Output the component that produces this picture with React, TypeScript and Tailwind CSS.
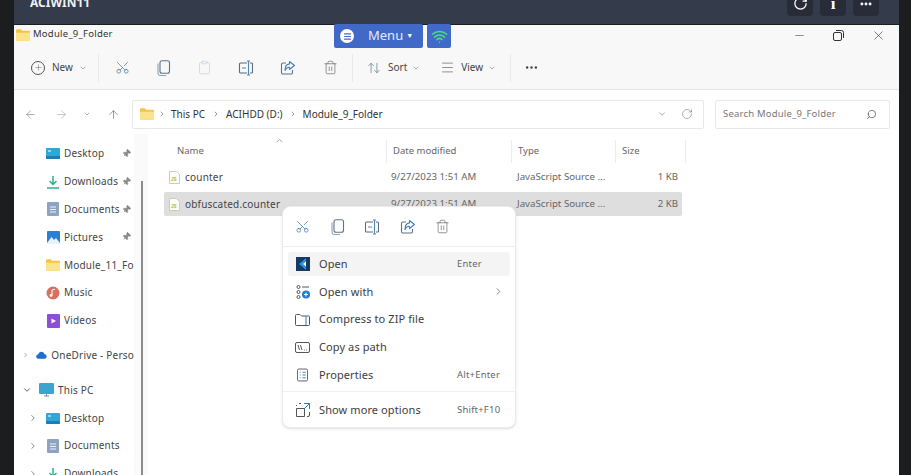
import React from "react";
import { ArrowLeft, ArrowRight, ArrowUp, ArrowUpDown, ChevronDown, ChevronRight, ChevronUp, Clipboard, Ellipsis, Menu as MenuIcon, Minus, Pin, Plus, RotateCw, Scissors, Search, Trash2, Wifi, X } from "lucide-react";

const font = "font-['Noto_Sans','Open_Sans',sans-serif]";

function Folder({ className = "w-[14px] h-[12px]" }: { className?: string }) {
  return (
    <svg viewBox="0 0 16 13" className={className}>
      <path d="M0 1.5C0 .7.6 0 1.4 0h4l1.6 1.6h7.6c.8 0 1.400.6 1.400 1.400v8.600c0 .8-.6 1.400-1.400 1.400H1.400C.6 13 0 12.400 0 11.600z" fill="#f5c542" />
      <path d="M0 4h16v7.600c0 .8-.6 1.400-1.400 1.400H1.400C.6 13 0 12.400 0 11.600z" fill="#fbe38e" />
    </svg>
  );
}

function RestoreIcon() {
  return (
    <svg width="11" height="11" viewBox="0 0 11 11" fill="none" stroke="#333" strokeWidth="1">
      <rect x=".5" y="2.500" width="8" height="8" rx="1.500" />
      <path d="M3 .5h5.500a2 2 0 0 1 2 2V8" />
    </svg>
  );
}

function RenameIcon({ size = 16 }: { size?: number }) {
  return (
    <svg width={size} height={size} viewBox="0 0 16 16" fill="none" strokeWidth="1.100">
      <path d="M9 3H2.500A1 1 0 0 0 1.500 4v8a1 1 0 0 0 1 1H9M12 3h1.500a1 1 0 0 1 1 1v8a1 1 0 0 1-1 1H12" stroke="#5f6b76" />
      <path d="M10.500 1v14M9 1h3M9 15h3M4 8h4" stroke="#4b86bb" />
    </svg>
  );
}

function CopyIcon() {
  return (
    <svg width="15" height="16" viewBox="0 0 15 16" fill="none" stroke="#5f7386" strokeWidth="1.100">
      <rect x="4" y=".8" width="9.500" height="12.500" rx="2" />
      <path d="M2 3.500v9.500a2.500 2.500 0 0 0 2.500 2.500H10" stroke="#8fa0af" />
    </svg>
  );
}

function ShareIcon() {
  return (
    <svg width="16" height="16" viewBox="0 0 16 16" fill="none" strokeWidth="1.100">
      <path d="M6 3H3a1.500 1.500 0 0 0-1.500 1.500v8A1.500 1.500 0 0 0 3 14h8a1.500 1.500 0 0 0 1.500-1.500V10" stroke="#5f7386" />
      <path d="M9.500 1.500 14.500 5.500 9.500 9.500V7.200C7.500 7.200 5.800 8.200 5 10.500 5 6.800 7 4.200 9.500 3.900z" stroke="#3f7fbf" strokeLinejoin="round" />
    </svg>
  );
}

function PageIcon({ tone }: { tone: "doc" | "js" }) {
  if (tone === "js") {
    return (
      <svg viewBox="0 0 11 13" className="w-[11px] h-[13px]">
        <path d="M.5.5h7l3 3v9H.5z" fill="#fdfdf6" stroke="#c9cdbf" />
        <text x="2" y="9.500" fontSize="4.500" fontWeight="700" fill="#a9b84a" fontFamily="Liberation Sans, sans-serif">JS</text>
      </svg>
    );
  }
  return (
    <svg viewBox="0 0 12 14" className="w-[12px] h-[14px]">
      <rect width="12" height="14" rx="1" fill="#8ea3bf" />
      <path d="M3 5h6M3 7.500h6M3 10h6" stroke="#eef2f7" />
    </svg>
  );
}

function QuickIcon({ kind }: { kind: string }) {
  if (kind === "desktop") {
    return (
      <svg viewBox="0 0 14 11" className="w-[14px] h-[11px]">
        <rect width="14" height="11" rx="1" fill="#2fa7d8" />
        <path d="M0 8h14v2a1 1 0 0 1-1 1H1a1 1 0 0 1-1-1z" fill="#1b7fb5" />
        <path d="M2 3h3" stroke="#fff" />
      </svg>
    );
  }
  if (kind === "downloads") {
    return (
      <svg viewBox="0 0 14 14" className="w-[14px] h-[14px]" fill="none" stroke="#2fb08b" strokeWidth="1.500">
        <path d="M7 1v8M3.500 6 7 9.500 10.500 6M1 13h12" />
      </svg>
    );
  }
  if (kind === "documents") return <PageIcon tone="doc" />;
  if (kind === "pictures") {
    return (
      <svg viewBox="0 0 13 13" className="w-[13px] h-[13px]">
        <rect width="13" height="13" rx="1" fill="#2c7fd6" />
        <path d="M0 12 4.500 6 7 9l2-2 4 5v1H0z" fill="#e8f2fb" />
      </svg>
    );
  }
  if (kind === "folder") return <Folder className="w-[14px] h-[12px]" />;
  if (kind === "music") {
    return (
      <svg viewBox="0 0 14 14" className="w-[14px] h-[14px]">
        <circle cx="7" cy="7" r="6.500" fill="#d9705f" />
        <path d="M6 9.500V4l3-.8" stroke="#fff" fill="none" />
        <circle cx="5" cy="9.500" r="1.400" fill="#fff" />
      </svg>
    );
  }
  return (
    <svg viewBox="0 0 13 14" className="w-[13px] h-[14px]">
      <rect width="13" height="14" rx="1" fill="#8d4fd4" />
      <path d="M4.500 4.500v5L9 7z" fill="#fff" />
    </svg>
  );
}

function SideRow({ kind, label, pinned }: { kind: string; label: string; pinned?: boolean }) {
  return (
    <div className="h-[27.8px] flex items-center pl-[32px] relative whitespace-nowrap overflow-hidden">
      <span className="w-[14px] flex justify-center"><QuickIcon kind={kind} /></span>
      <span className="ml-[4px] text-[10px] text-[#444] tracking-[0.2px]">{label}</span>
      {pinned && <Pin size={9} className="absolute left-[108px] top-[9px] text-[#8a8a8a] fill-[#8a8a8a] rotate-45" />}
    </div>
  );
}

function TreeRow({ kind, label }: { kind: string; label: string }) {
  return (
    <div className="h-[27.8px] flex items-center pl-[14px] whitespace-nowrap overflow-hidden">
      <span className="w-[18px] flex items-center text-[#777]">
        <ChevronRight size={10} />
      </span>
      <span className="w-[14px] flex justify-center"><QuickIcon kind={kind} /></span>
      <span className="ml-[4px] text-[10px] text-[#444] tracking-[0.2px]">{label}</span>
    </div>
  );
}

function FileRow({ name, size, selected }: { name: string; size: string; selected?: boolean }) {
  return (
    <div className={`h-[24px] mb-[3px] ml-[16px] w-[518px] flex items-center text-[9.7px] text-[#666] whitespace-nowrap rounded-[2px] ${selected ? "bg-[#dedede]" : ""}`}>
      <span className="w-[21px] pl-[5px] flex"><PageIcon tone="js" /></span>
      <span className="w-[206px] text-[10px] text-[#444] tracking-[0.2px]">{name}</span>
      <span className="w-[126px]">9/27/2023 1:51 AM</span>
      <span className="w-[131px]">JavaScript Source ...</span>
      <span className="w-[30px] text-right">{size}</span>
    </div>
  );
}

function CtxRow({ icon, label, hint, active, arrow }: { icon: React.ReactNode; label: string; hint?: string; active?: boolean; arrow?: boolean }) {
  return (
    <div className={`h-[24px] mb-[3.8px] mx-[5px] rounded-[3px] flex items-center pl-[7px] pr-[3px] ${active ? "bg-[#f4f4f4]" : ""}`}>
      <span className="w-[15px] flex justify-center">{icon}</span>
      <span className="ml-[9px] flex-1 text-[11px] text-[#3d3d3d] tracking-[0.1px]">{label}</span>
      {hint && <span className="w-[50px] text-[9.5px] text-[#666] tracking-[0.2px]">{hint}</span>}
      {arrow && <ChevronRight size={11} className="text-[#777] mr-[3px]" />}
    </div>
  );
}

export default function App() {
  return (
    <div className={`w-[911px] h-[475px] overflow-hidden relative bg-[#1c1d1f] flex flex-col pl-[14px] pr-[12px] ${font}`}>
      {/* remote session bar */}
      <div className="h-[24px] shrink-0 bg-[#343b4a] flex justify-between pl-[16px] pr-[20px]">
        <span className="text-[12px] font-bold text-[#eef0f3] -mt-[6px] leading-[18px]">ACIWIN11</span>
        <div className="flex gap-[7px] -mt-[9px]">
          <span className="w-[26px] h-[25px] rounded-[4px] bg-[#272c38] flex items-center justify-center text-white"><RotateCw size={15} /></span>
          <span className="w-[26px] h-[25px] rounded-[4px] bg-[#272c38] flex items-center justify-center text-white text-[17px] font-bold font-['Liberation_Serif',serif]">i</span>
          <span className="w-[26px] h-[25px] rounded-[4px] bg-[#272c38] flex items-center justify-center text-white"><Ellipsis size={14} strokeWidth={3} /></span>
        </div>
      </div>

      {/* explorer window */}
      <div className="flex-1 mt-[1px] bg-white flex flex-col min-h-0">
        <div className="h-[65px] shrink-0 bg-[#f8f8f8] border-b border-[#e6e6e6]">
          <div className="h-[19px] flex items-center pl-[2px] relative">
            <Folder />
            <span className="ml-[3px] text-[9.5px] text-[#333] tracking-[0.25px]">Module_9_Folder</span>
            <div className="ml-auto mr-[13px] flex items-center gap-[27px] text-[#333] pt-[1px]">
              <Minus size={13} strokeWidth={1} />
              <RestoreIcon />
              <X size={15} strokeWidth={1} />
            </div>
          </div>
          <div className="h-[35px] mt-[6px] flex items-center text-[#555]">
            <div className="w-[85px] h-[28px] pl-[17px] flex items-center border-r border-[#e9e9e9]">
              <span className="w-[14px] h-[14px] rounded-full border border-[#555] flex items-center justify-center"><Plus size={9} strokeWidth={1.2} /></span>
              <span className="ml-[7px] text-[10px] text-[#444]">New</span>
              <ChevronDown size={8} className="ml-[6px] text-[#888]" />
            </div>
            <div className="w-[254px] h-[28px] pl-[16px] flex items-center gap-[26px] border-r border-[#e9e9e9]">
              <Scissors size={15} strokeWidth={1.2} className="text-[#3f7fbf] -rotate-90" />
              <CopyIcon />
              <Clipboard size={15} strokeWidth={1.1} className="text-[#c3ced6]" />
              <RenameIcon />
              <ShareIcon />
              <Trash2 size={15} strokeWidth={1.1} className="text-[#666] ml-[1px]" />
            </div>
            <div className="flex items-center pl-[14px]">
              <ArrowUpDown size={14} strokeWidth={1.1} className="text-[#4a6b8a]" />
              <span className="ml-[7px] text-[10px] text-[#444]">Sort</span>
              <ChevronDown size={8} className="ml-[5px] text-[#888]" />
              <MenuIcon size={15} strokeWidth={1} className="ml-[20px] text-[#555]" />
              <span className="ml-[6px] text-[10px] text-[#444]">View</span>
              <ChevronDown size={8} className="ml-[5px] text-[#888]" />
            </div>
            <div className="w-[1px] h-[28px] bg-[#e9e9e9] ml-[14px]" />
            <Ellipsis size={15} className="ml-[13px] text-[#444]" />
          </div>
        </div>

        {/* address row */}
        <div className="h-[44px] shrink-0 flex items-center pr-[9px] pt-[4px]">
          <div className="w-[118px] flex items-center text-[#888] pl-[10px]">
            <ArrowLeft size={13} strokeWidth={1.2} />
            <ArrowRight size={13} strokeWidth={1.2} className="ml-[18px] text-[#aaa]" />
            <ChevronDown size={8} className="ml-[15px]" />
            <ArrowUp size={13} strokeWidth={1.2} className="ml-[16px] text-[#666]" />
          </div>
          <div className="w-[572px] h-[29px] border border-[#e8e8e8] rounded-[2px] flex items-center pl-[7px] pr-[10px] text-[10px] text-[#333]">
            <Folder />
            <ChevronRight size={8} className="ml-[4px] text-[#666]" />
            <span className="ml-[5px]">This PC</span>
            <ChevronRight size={8} className="ml-[7px] text-[#666]" />
            <span className="ml-[6px]">ACIHDD (D:)</span>
            <ChevronRight size={8} className="ml-[6px] text-[#666]" />
            <span className="ml-[6px]">Module_9_Folder</span>
            <ChevronDown size={10} className="ml-auto mr-[14px] text-[#999]" />
            <RotateCw size={12} strokeWidth={1} className="text-[#666]" />
          </div>
          <div className="ml-[11px] w-[175px] h-[29px] border border-[#e8e8e8] rounded-[2px] flex items-center pl-[7px] pr-[12px] text-[9.5px] text-[#777] tracking-[0.2px]">
            <span>Search Module_9_Folder</span>
            <Search size={11} strokeWidth={1.6} className="ml-auto text-[#555] -scale-x-100" />
          </div>
        </div>

        <div className="flex-1 flex min-h-0">
          {/* navigation pane */}
          <div className="w-[120px] shrink-0 pt-[6px] overflow-hidden">
            <SideRow kind="desktop" label="Desktop" pinned />
            <SideRow kind="downloads" label="Downloads" pinned />
            <SideRow kind="documents" label="Documents" pinned />
            <SideRow kind="pictures" label="Pictures" pinned />
            <SideRow kind="folder" label="Module_11_Fol" />
            <SideRow kind="music" label="Music" />
            <SideRow kind="videos" label="Videos" />
            <div className="h-[7px]" />
            <div className="h-[27.8px] flex items-center pl-[8px] whitespace-nowrap">
              <ChevronRight size={10} className="text-[#777]" />
              <svg viewBox="0 0 15 10" className="w-[15px] h-[10px] ml-[7px]"><path d="M3.500 10a3 3 0 0 1-.5-6 4.500 4.500 0 0 1 8.500-.5A3.300 3.300 0 0 1 12 10z" fill="#1f6fd0" /></svg>
              <span className="ml-[4px] text-[10px] text-[#444] tracking-[0.2px]">OneDrive - Perso</span>
            </div>
            <div className="h-[7px]" />
            <div className="h-[27.8px] flex items-center pl-[8px] whitespace-nowrap">
              <ChevronDown size={10} className="text-[#444]" />
              <svg viewBox="0 0 15 14" className="w-[15px] h-[14px] ml-[7px]"><rect width="15" height="11" rx="1" fill="#3aa6cf" /><path d="M5 13h5M7.500 11v2" stroke="#7b8a94" /></svg>
              <span className="ml-[4px] text-[10px] text-[#444] tracking-[0.2px]">This PC</span>
            </div>
            <TreeRow kind="desktop" label="Desktop" />
            <TreeRow kind="documents" label="Documents" />
            <TreeRow kind="downloads" label="Downloads" />
          </div>

          {/* scrollbar gutter */}
          <div className="w-[14px] shrink-0 bg-[#fafafa] pt-[47px] pl-[7px]">
            <div className="w-[2px] h-full bg-[#8b8b8b]" />
          </div>

          {/* file list */}
          <div className="flex-1 relative">
            <div className="h-[27px] mt-[4px] flex items-center text-[9.5px] text-[#666] whitespace-nowrap relative">
              <ChevronUp size={9} className="absolute left-[127px] -top-[2px] text-[#888]" />
              <span className="ml-[29px] w-[210px] h-[23px] flex items-center border-r border-[#ececec]">Name</span>
              <span className="pl-[6px] w-[125px] h-[23px] flex items-center border-r border-[#ececec]">Date modified</span>
              <span className="pl-[6px] w-[104px] h-[23px] flex items-center border-r border-[#ececec]">Type</span>
              <span className="pl-[6px] w-[70px] h-[23px] flex items-center border-r border-[#ececec]">Size</span>
            </div>
            <div>
              <FileRow name="counter" size="1 KB" />
              <FileRow name="obfuscated.counter" size="2 KB" selected />
            </div>
          </div>
        </div>
      </div>

      {/* connection menu over the window */}
      <div className="absolute left-[334px] top-[24px] flex gap-[4px]">
        <div className="w-[89px] h-[24px] bg-[#4169c7] rounded-[2px] flex items-center pl-[6px] text-white">
          <span className="w-[14px] h-[14px] rounded-full bg-white flex items-center justify-center text-[#4169c7]"><MenuIcon size={9} strokeWidth={3} /></span>
          <span className="ml-[14px] text-[13px] text-[#e6ecfa]">Menu</span>
          <span className="ml-[3px] text-[7px]">▼</span>
        </div>
        <div className="w-[24px] h-[24px] bg-[#4169c7] rounded-[2px] flex items-center justify-center">
          <Wifi size={17} strokeWidth={2.2} className="text-[#4ade80]" />
        </div>
      </div>

      {/* context menu */}
      <div className="absolute left-[282px] top-[206px] w-[234px] h-[222px] bg-white rounded-[8px] border border-[#ececec] shadow-sm">
        <div className="h-[40px] flex items-center pl-[12px] gap-[19.5px] border-b border-[#efefef]">
          <Scissors size={15} strokeWidth={1.2} className="text-[#3f7fbf] -rotate-90" />
          <CopyIcon />
          <RenameIcon />
          <ShareIcon />
          <Trash2 size={15} strokeWidth={1.1} className="text-[#666]" />
        </div>
        <div className="pt-[5px]">
          <CtxRow active label="Open" hint="Enter" icon={
            <svg viewBox="0 0 14 14" className="w-[14px] h-[14px]"><rect width="14" height="14" fill="#123a63" /><path d="M10 1v12L3 7z" fill="#2b8fd9" /><path d="M7 7l3-2.500v5z" fill="#fff" /></svg>
          } />
          <CtxRow arrow label="Open with" icon={
            <svg viewBox="0 0 14 14" className="w-[14px] h-[14px]" fill="none"><circle cx="2.500" cy="2" r="1.500" stroke="#555" /><circle cx="2.500" cy="7" r="1.500" stroke="#555" /><circle cx="2.500" cy="12" r="1.500" stroke="#555" /><path d="M6 2h7" stroke="#555" /><circle cx="10" cy="9.500" r="4" fill="#1f7ad1" /><path d="M10 7.500v4M8 9.500h4" stroke="#fff" /></svg>
          } />
          <CtxRow label="Compress to ZIP file" icon={
            <svg viewBox="0 0 15 13" className="w-[15px] h-[13px]" fill="none" stroke="#555"><path d="M.5 2.500a1 1 0 0 1 1-1h3.500l1.500 1.500h7a1 1 0 0 1 1 1v7.500a1 1 0 0 1-1 1h-12a1 1 0 0 1-1-1z" /><path d="M11 3v9" stroke="#2b7cc4" /></svg>
          } />
          <CtxRow label="Copy as path" icon={
            <svg viewBox="0 0 15 11" className="w-[15px] h-[11px]" fill="none" stroke="#555"><rect x=".5" y=".5" width="14" height="10" rx="1.500" /><path d="M3 3l1.500 5M5.500 3 7 8M9 8h.8M11 8h.8" /></svg>
          } />
          <CtxRow label="Properties" hint="Alt+Enter" icon={
            <svg viewBox="0 0 12 14" className="w-[11px] h-[14px]" fill="none" stroke="#555"><rect x=".5" y=".5" width="11" height="13" rx="1.500" /><path d="M3 4h1M6 4h3.500M3 7h1M6 7h3.500M3 10h1M6 10h3.500" stroke="#2b7cc4" /></svg>
          } />
        </div>
        <div className="h-[1px] bg-[#efefef] mt-[1px]" />
        <div className="pt-[6px]">
          <CtxRow label="Show more options" hint="Shift+F10" icon={
            <svg viewBox="0 0 14 14" className="w-[14px] h-[14px]" fill="none" stroke="#555"><path d="M.5 5.500h8v8h-8zM5 .5h-2M.5 3V2M13.500 9v3a1.500 1.500 0 0 1-1.500 1.500h-1" /><path d="M8 .5h5.500V6M13.500.5 8 6" stroke="#2b7cc4" /></svg>
          } />
        </div>
      </div>
    </div>
  );
}
